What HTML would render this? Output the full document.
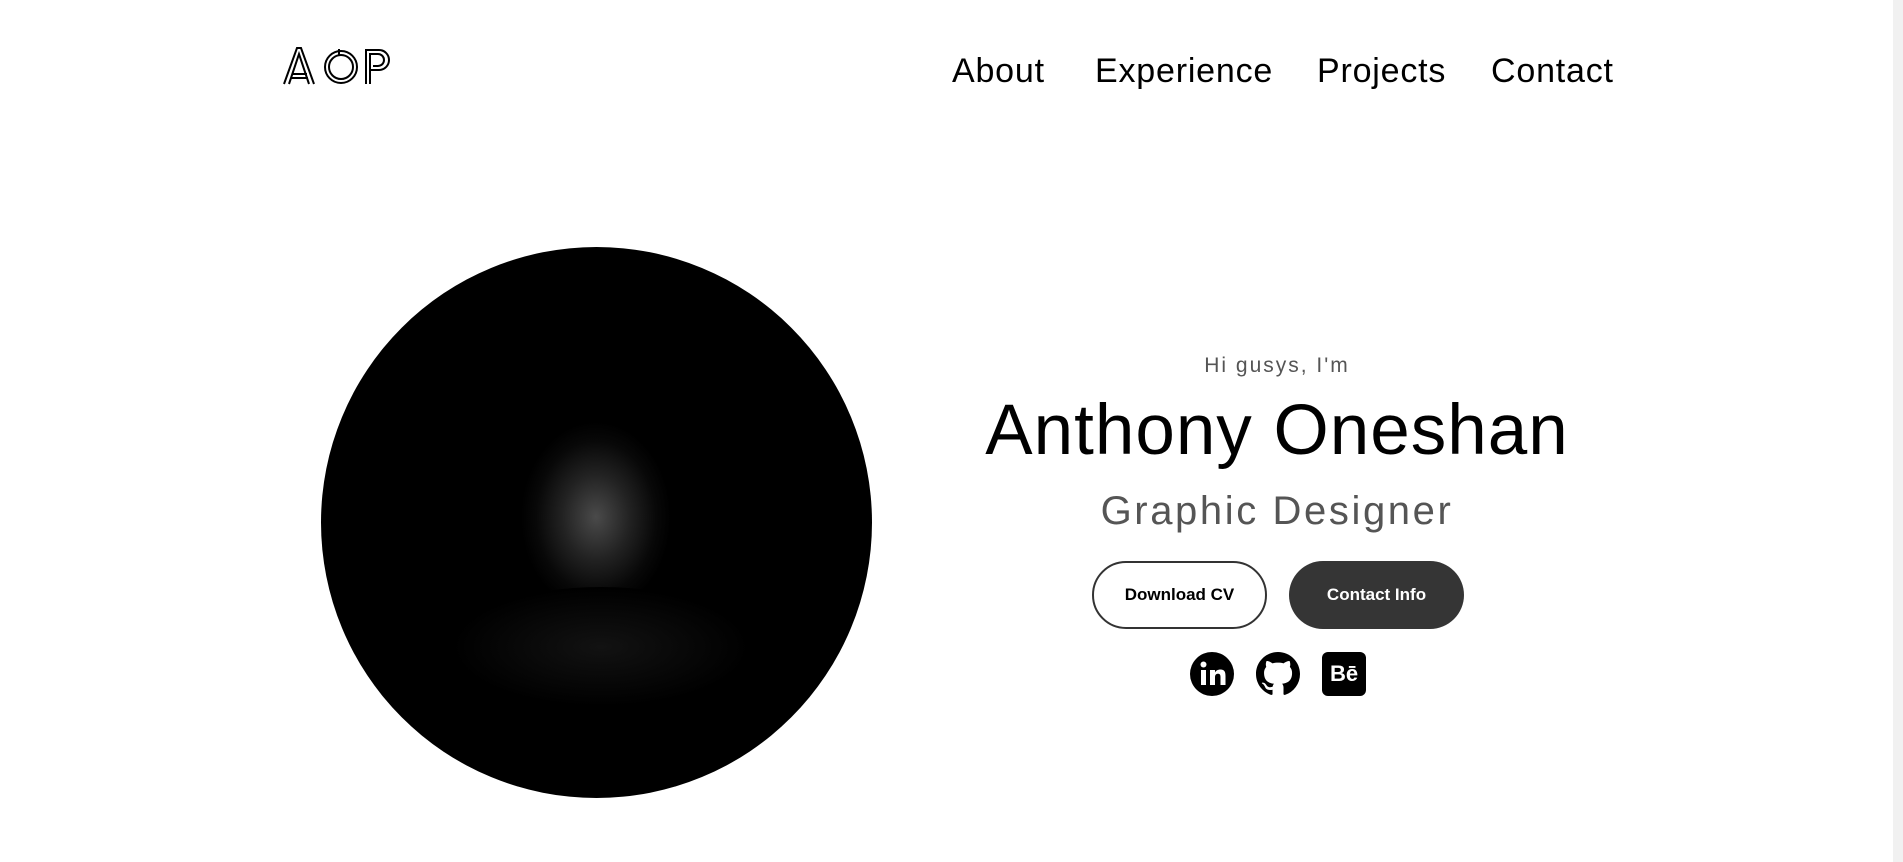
<!DOCTYPE html>
<html><head><meta charset="utf-8"><style>
*{margin:0;padding:0;box-sizing:border-box}
body{width:1903px;height:862px;background:#fff;position:relative;overflow:hidden;font-family:"Liberation Sans",sans-serif;color:#000}
.nav a{position:absolute;top:52px;font-size:34px;letter-spacing:0.8px;color:#000;text-decoration:none;white-space:nowrap}
.c{position:absolute;left:0;width:2554px;text-align:center}
.btn{position:absolute;top:561px;width:175px;height:68px;border-radius:34px;font-weight:bold;font-size:17px;display:flex;align-items:center;justify-content:center}
</style></head><body>
<svg style="position:absolute;left:283px;top:46px" width="112" height="40" viewBox="0 0 112 40" fill="none" stroke="#000" stroke-width="2">
<path d="M1 38 L14 2 L18 2 L31 38"/><path d="M6 38 L16 8 L26 38"/><path d="M9 28 H24"/><path d="M8 32 H25"/>
<circle cx="58" cy="21" r="16"/><circle cx="58" cy="21" r="12"/><path d="M56 3 V9"/>
<path d="M83 38 V4 H96 A10 10 0 0 1 96 24 H87"/><path d="M87 38 V8 H95 A6 6 0 0 1 95 20 H90"/>
</svg>
<div class="nav"><a style="left:952px">About</a><a style="left:1095px">Experience</a><a style="left:1317px">Projects</a><a style="left:1491px">Contact</a></div>
<div style="position:absolute;left:321px;top:247px;width:551px;height:551px;border-radius:50%;background:radial-gradient(ellipse 75px 95px at 275px 270px,#4a4a4a 0%,#222 45%,#080808 80%,#000 100%),#000;overflow:hidden">
<div style="position:absolute;left:130px;top:340px;width:300px;height:120px;border-radius:50%;background:radial-gradient(ellipse at center,#121212,#000 70%)"></div>
</div>
<div class="c" style="top:354px;font-size:21px;color:#555;letter-spacing:2px">Hi gusys, I'm</div>
<div class="c" style="top:390px;font-size:71px;letter-spacing:1px;color:#000">Anthony Oneshan</div>
<div class="c" style="top:489px;font-size:40px;color:#555;letter-spacing:2.6px">Graphic Designer</div>
<div class="btn" style="left:1092px;border:2px solid #333;background:#fff;color:#000">Download CV</div>
<div class="btn" style="left:1289px;background:#353535;color:#fff">Contact Info</div>
<svg style="position:absolute;left:1190px;top:652px" width="44" height="44" viewBox="0 0 44 44"><circle cx="22" cy="22" r="22"/><rect x="11" y="18" width="5" height="15" fill="#fff"/><circle cx="13.5" cy="12.5" r="3" fill="#fff"/><path d="M20 18h5v2.5c1-2 3-3 5.5-3 4 0 5 2.5 5 6.5V33h-5v-8c0-2-.5-3.3-2.5-3.3S25 23 25 25v8h-5z" fill="#fff"/></svg>
<svg style="position:absolute;left:1256px;top:652px" width="44" height="44" viewBox="0 0 16 16"><path d="M8 0C3.580 0 0 3.58 0 8c0 3.54 2.290 6.53 5.470 7.59.4.07.55-.17.55-.38 0-.19-.01-.82-.01-1.49-2.010.37-2.530-.49-2.690-.94-.09-.23-.48-.94-.82-1.13-.28-.15-.68-.52-.01-.53.63-.01 1.080.58 1.230.82.72 1.210 1.870.87 2.330.66.07-.52.28-.87.51-1.07-1.780-.2-3.640-.89-3.640-3.95 0-.87.31-1.590.82-2.150-.08-.2-.36-1.020.08-2.120 0 0 .67-.21 2.200.82.64-.18 1.320-.27 2-.27.68 0 1.360.09 2 .27 1.530-1.040 2.200-.82 2.200-.82.44 1.100.16 1.920.08 2.120.51.56.82 1.270.82 2.150 0 3.070-1.870 3.750-3.650 3.950.29.25.54.73.54 1.480 0 1.070-.01 1.930-.01 2.200 0 .21.15.46.55.38A8.013 8.013 0 0016 8c0-4.420-3.580-8-8-8z"/></svg>
<div style="position:absolute;left:1322px;top:652px;width:44px;height:44px;border-radius:6px;background:#000;color:#fff;font-weight:bold;font-size:22px;display:flex;align-items:center;justify-content:center">Bē</div>
<div style="position:absolute;left:1893px;top:0;width:10px;height:862px;background:#f1f1f1"></div>
</body></html>
